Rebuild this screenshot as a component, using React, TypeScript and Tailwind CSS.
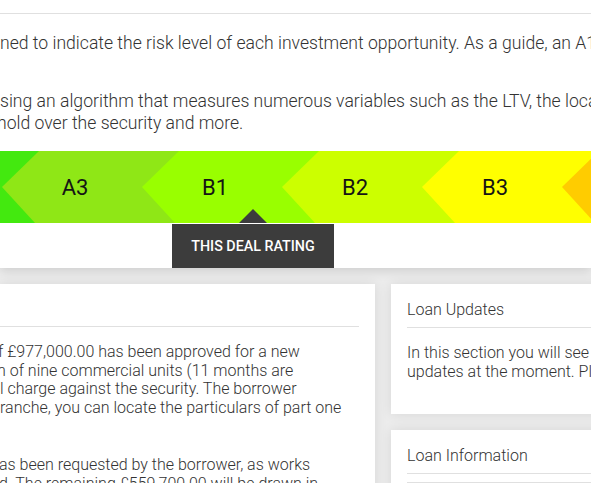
import React from "react";

const segments = [
  { label: "A2", color: "bg-[#43e90f]" },
  { label: "A3", color: "bg-[#8fe716]" },
  { label: "B1", color: "bg-[#99ff00]" },
  { label: "B2", color: "bg-[#ccff00]" },
  { label: "B3", color: "bg-[#ffff00]" },
  { label: "C1", color: "bg-[#ffcc00]" },
];

export default function App() {
  return (
    <div className="w-[591px] h-[483px] overflow-hidden bg-[#ececec] font-['Roboto',sans-serif] text-[#333]">
      <section className="relative z-10 bg-white shadow-[0_3px_10px_rgba(0,0,0,0.13)]">
        <div className="h-[13px]" />
        <div className="border-t border-[#e0e0e0]" />
        <p className="mt-[18px] whitespace-nowrap text-[17.6px] leading-[22px] font-light">
          ned to indicate the risk level of each investment opportunity. As a guide, an A1 rating
        </p>
        <div className="mt-[36px] text-[17.6px] leading-[22px] font-light">
          <p className="whitespace-nowrap">
            sing an algorithm that measures numerous variables such as the LTV, the location
          </p>
          <p className="whitespace-nowrap ml-[-3px]">hold over the security and more.</p>
        </div>
        <div className="relative mt-[17px]">
          <div className="flex ml-[-138px]">
            {segments.map((s) => (
              <div
                key={s.label}
                className={`shrink-0 w-[177px] h-[72px] mr-[-37px] flex items-center ${s.color} [clip-path:polygon(0_50%,37px_0,100%_0,100%_100%,33px_100%)]`}
              >
                <div className="w-[146px] text-center text-[22px] font-normal text-[#151515]">
                  {s.label}
                </div>
              </div>
            ))}
          </div>
          <div className="absolute left-[239px] top-[58px] w-0 h-0 border-l-[14px] border-r-[14px] border-b-[14px] border-l-transparent border-r-transparent border-b-[#3c3c3c]" />
          <div className="h-[45px]" />
          <div className="absolute left-[172px] top-[73px] w-[162px] h-[44px] bg-[#3c3c3c] flex items-center justify-center pt-[2px]">
            <span className="text-white text-[14.3px] font-medium uppercase">
              This deal rating
            </span>
          </div>
        </div>
      </section>

      <div className="flex gap-4 pt-4">
        <div className="shrink-0 w-[375px] h-[260px] bg-white shadow-[0_0_12px_rgba(0,0,0,0.09)] pr-4 overflow-hidden">
          <div className="pt-[13px] pb-[6px] border-b border-[#e0e0e0] h-[43px]" />
          <div className="pt-4 text-[16px] leading-[18.5px] font-light whitespace-nowrap">
            <p className="ml-[-2px]">f £977,000.00 has been approved for a new</p>
            <p className="ml-[-3px]">n of nine commercial units (11 months are</p>
            <p className="ml-[0px]">l charge against the security. The borrower</p>
            <p className="ml-[0px]">ranche, you can locate the particulars of part one</p>
            <p className="mt-[39px] ml-[-1px]">as been requested by the borrower, as works</p>
            <p className="ml-[-1px]">d. The remaining £559,700.00 will be drawn in</p>
          </div>
        </div>

        <div className="shrink-0 w-[300px] flex flex-col gap-4">
          <div className="bg-white shadow-[0_0_12px_rgba(0,0,0,0.09)] px-4 pt-[14px] pb-[33px]">
            <div className="pb-[5px] border-b border-[#e0e0e0] text-[16px] leading-[24px] font-light whitespace-nowrap">
              Loan Updates
            </div>
            <div className="pt-4 text-[16px] leading-[18.5px] font-light whitespace-nowrap">
              <p>In this section you will see any updates</p>
              <p>updates at the moment. Please check back</p>
            </div>
          </div>
          <div className="bg-white shadow-[0_0_12px_rgba(0,0,0,0.09)] px-4 pt-[14px] pb-[32px]">
            <div className="pb-[5px] border-b border-[#e0e0e0] text-[16px] leading-[24px] font-light whitespace-nowrap">
              Loan Information
            </div>
            <div className="mt-[8px] border-t border-[#e0e0e0] h-[40px]" />
          </div>
        </div>
      </div>
    </div>
  );
}
